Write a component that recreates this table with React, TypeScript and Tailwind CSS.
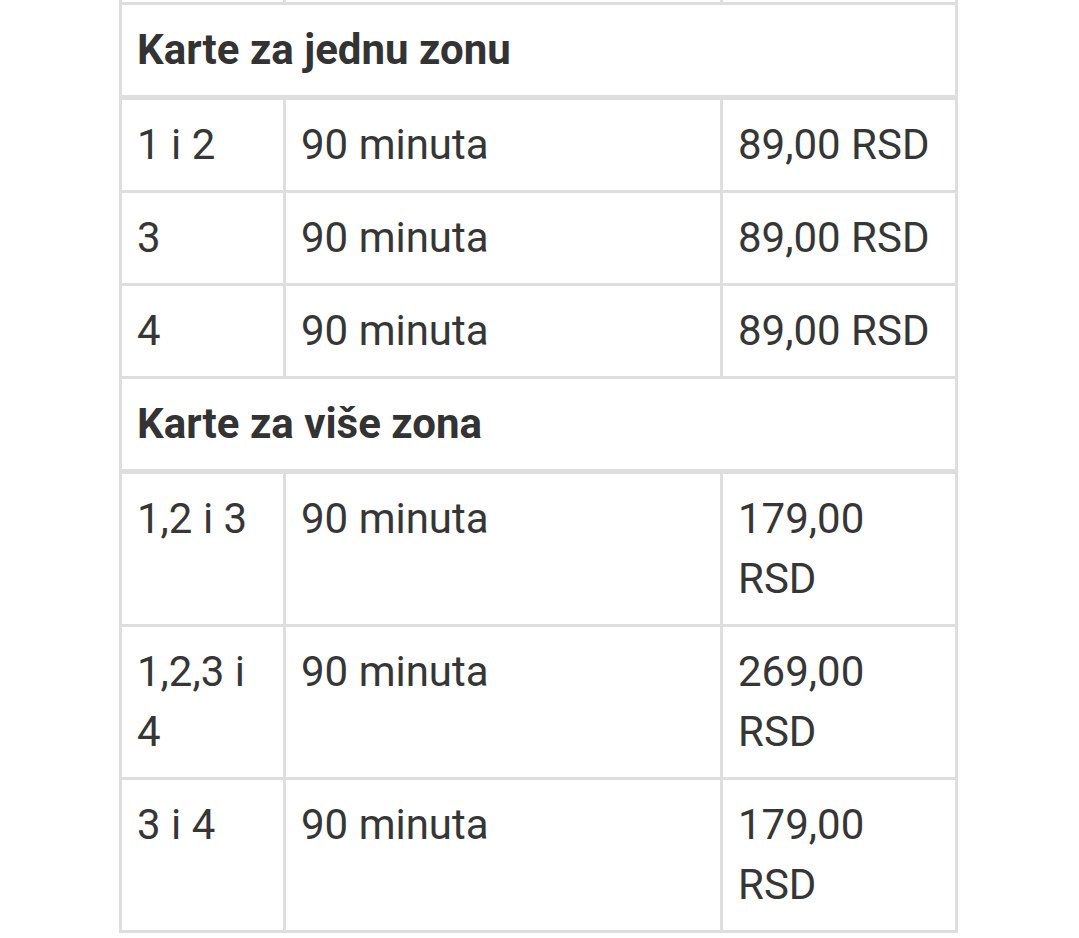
import React from "react";

type Row = { zone: string; time: string; price: string };

const single: Row[] = [
  { zone: "1 i 2", time: "90 minuta", price: "89,00 RSD" },
  { zone: "3", time: "90 minuta", price: "89,00 RSD" },
  { zone: "4", time: "90 minuta", price: "89,00 RSD" },
];

const multi: Row[] = [
  { zone: "1,2 i 3", time: "90 minuta", price: "179,00 RSD" },
  { zone: "1,2,3 i 4", time: "90 minuta", price: "269,00 RSD" },
  { zone: "3 i 4", time: "90 minuta", price: "179,00 RSD" },
];

function DataRow({ r }: { r: Row }) {
  return (
    <div className="flex border-b-[3px] border-[#dedede] text-[42px] leading-[60px] text-[#363636]">
      <div className="w-[164px] shrink-0 border-r-[3px] border-[#dedede] px-[15px] py-[15px]">{r.zone}</div>
      <div className="w-[437px] shrink-0 border-r-[3px] border-[#dedede] px-[15px] py-[15px]">{r.time}</div>
      <div className="flex-1 px-[15px] py-[15px]">{r.price}</div>
    </div>
  );
}

function Header({ title }: { title: string }) {
  return (
    <div className="border-b-[5px] border-[#dedede] px-[15px] py-[15px] text-[42px] font-bold leading-[60px] text-[#333333]">
      {title}
    </div>
  );
}

export default function App() {
  return (
    <div className="min-h-[938px] w-full bg-white" style={{ fontFamily: "Roboto, 'Noto Sans', sans-serif" }}>
      <div className="ml-[119px] w-[839px] border-x-[3px] border-[#dedede]">
        <div className="flex h-[5px] border-b-[3px] border-[#dedede]">
          <div className="w-[164px] shrink-0 border-r-[3px] border-[#dedede]" />
          <div className="w-[437px] shrink-0 border-r-[3px] border-[#dedede]" />
          <div className="flex-1" />
        </div>
        <Header title="Karte za jednu zonu" />
        {single.map((r, i) => (
          <DataRow key={i} r={r} />
        ))}
        <Header title="Karte za više zona" />
        {multi.map((r, i) => (
          <DataRow key={i} r={r} />
        ))}
      </div>
    </div>
  );
}
